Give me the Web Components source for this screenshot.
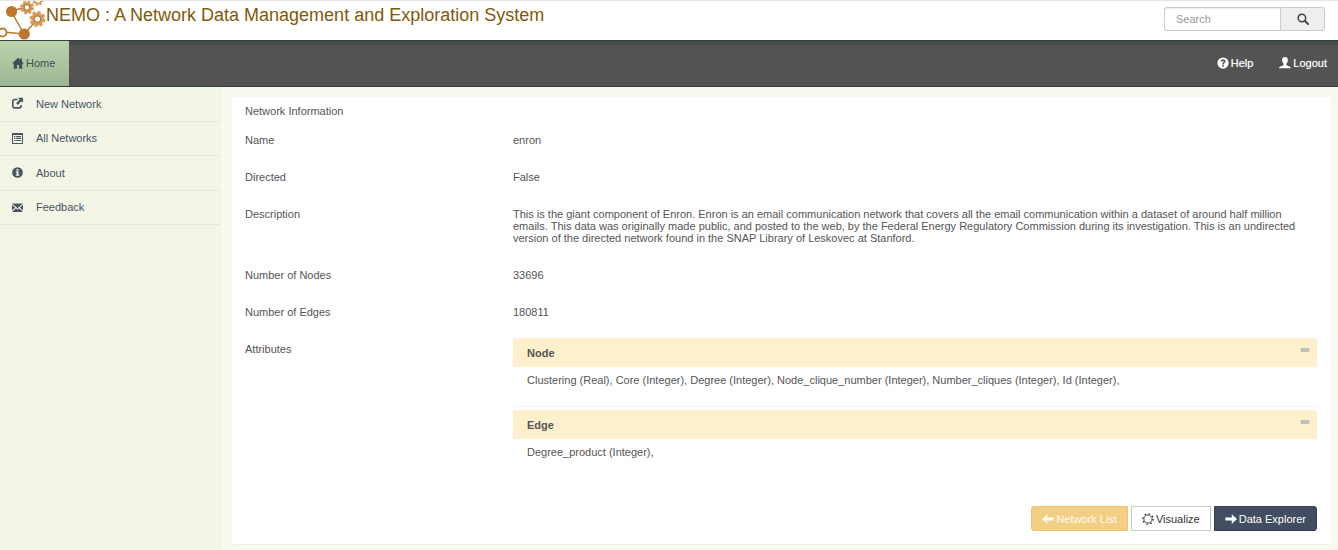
<!DOCTYPE html>
<html lang="en">
<head>
<meta charset="utf-8">
<title>NEMO</title>
<style>
html,body{margin:0;min-height:100%}
body{font:11px/12px "Liberation Sans",Arial,sans-serif;color:#555;background:#f9f9f0}
</style>
</head>
<body>
<nemo-app></nemo-app>
<script>
const ICONS={
home:'<path d="M8 1 0 8.800h2.400V15.500h4.300v-5h2.600v5h4.300V8.800H16L13.200 6V2h-2.400v1.800z"/>',
help:'<path fill-rule="evenodd" d="M8 .5a7.500 7.500 0 1 0 0 15 7.500 7.500 0 0 0 0-15zM6.900 11h2.200v2H6.900zM4.900 6.200C5 4.200 6.200 3 8.200 3c1.900 0 3.200 1.100 3.200 2.800 0 2.300-2.300 2.300-2.300 4.200H6.900c0-2.600 2.100-2.900 2.100-4 0-.6-.3-1-.9-1-.7 0-1 .5-1.100 1.400z"/>',
user:'<path d="M8 0C5.500 0 4.200 1.600 4.200 4c0 2.200.8 4 2 5v1.500C5.800 11.500 0 12 0 15h16c0-3-5.800-3.500-6.200-4.500V9c1.200-1 2-2.800 2-5C11.800 1.600 10.500 0 8 0z"/>',
search:'<path fill="none" stroke="currentColor" stroke-width="2" d="M11.500 6.700a5 5 0 1 1-10 0 5 5 0 0 1 10 0z"/><path fill="none" stroke="currentColor" stroke-width="2.600" stroke-linecap="round" d="m10.700 10.700 4 4"/>',
share:'<path fill="none" stroke="currentColor" stroke-width="2.400" d="M8 2.200H4A2.700 2.700 0 0 0 1.200 5v6.700a2.700 2.700 0 0 0 2.800 2.700h6.500a2.700 2.700 0 0 0 2.700-2.700V10"/><path d="M8.500-.5H16V7l-2.300-2.300L8.500 10 6 7.500l5.200-5.200z"/>',
list:'<path fill-rule="evenodd" d="M0 0h16v16H0zM1.500 3v11.500h13V3z"/><path d="M3 4.500h2V6H3zm3 0h7V6H6zM3 7.300h2v1.500H3zm3 0h7v1.500H6zM3 10.200h2v1.500H3zm3 0h7v1.500H6z"/>',
info:'<path fill-rule="evenodd" d="M8 .2a7.800 7.800 0 1 0 0 15.600A7.800 7.800 0 0 0 8 .2zM6.500 2.800h3v2.300h-3zM5.500 6.300h4v5h1.200v1.600H5.500v-1.600h1.200V8H5.500z"/>',
mail:'<path d="M0 2h16L8 9zM0 4l4.600 4L0 12.500zM16 4l-4.600 4 4.600 4.500zM0 14.500 5.700 9 8 11l2.300-2 5.700 5.500z"/>',
left:'<path d="M0 8l7-6.500V6h8.500v4H7v4.500z"/>',
right:'<path d="M16 8 9 1.500V6H.500v4H9v4.500z"/>',
cog:'<g fill="none" stroke="currentColor"><circle cx="8" cy="8" r="5.500" stroke-width="1.200"/><circle cx="8" cy="8" r="6.900" stroke-width="1.800" stroke-dasharray="2 3.419"/></g>',
minus:'<path fill="#bcbcbc" d="M1 5h14v6H1z"/>'
};
function define(name,html,setup){
  customElements.define(name,class extends HTMLElement{
    constructor(){super();this.attachShadow({mode:'open'}).innerHTML=html}
    connectedCallback(){if(setup)setup(this,this.shadowRoot)}
  });
}
define('nemo-icon','<style>:host{display:inline-block;flex:none;width:12px;height:12px}svg{display:block;width:100%;height:100%;overflow:visible}</style><svg viewBox="0 0 16 16" fill="currentColor" aria-hidden="true"></svg>',
 (e,r)=>{r.querySelector('svg').innerHTML=ICONS[e.getAttribute('name')]||''});

define('nemo-logo',`<style>:host{display:block;width:46px;height:39px}svg{display:block}</style>
<svg width="46" height="39" viewBox="0 1 46 39" aria-hidden="true">
<g stroke="#bf7730" stroke-width="1.500" fill="none"><path d="M11 11 24 34 37 20M11 11 27 7M3 32l21 2"/></g>
<g stroke="#d59b60" fill="#fff">
<circle cx="27" cy="7.500" r="4" stroke-width="3"/><circle cx="27" cy="7.500" r="5.800" fill="none" stroke-width="2.400" stroke-dasharray="2.500 2.055"/>
<circle cx="37.500" cy="19" r="4.800" stroke-width="3.200"/><circle cx="37.500" cy="19" r="6.800" fill="none" stroke-width="2.600" stroke-dasharray="3 2.341"/>
<circle cx="38" cy="0" r="3.500" stroke-width="2"/><circle cx="38" cy="0" r="4.800" fill="none" stroke-width="2" stroke-dasharray="2 1.770"/></g>
<g stroke="#bf7730" stroke-width="1.200" fill="#fff"><circle cx="27" cy="7.500" r="2.800"/><circle cx="37.500" cy="19" r="3.200"/><circle cx="2.500" cy="32.500" r="4" stroke-width="1.800"/></g>
<g fill="#bf7730"><circle cx="11.500" cy="11.500" r="5.600"/><circle cx="24.300" cy="34" r="5.600"/></g></svg>`);

define('nemo-header',`<style>
:host{display:flex;height:39px;border-top:1px solid #e7e7e7;background:#fff;justify-content:space-between}
.brand{display:flex}
h1{margin:4px 0 0;font-size:18px;line-height:20px;font-weight:400;color:#7f5a0a}
form{display:flex;margin:6px 13px 0 0;width:161px;height:24px}
input{box-sizing:border-box;flex:1;min-width:0;border:1px solid #ccc;border-right:0;border-radius:3px 0 0 3px;padding:0 11px;font:inherit;color:#555;box-shadow:inset 0 1px 1px #00000013}
input::placeholder{color:#999;opacity:1}
button{box-sizing:border-box;width:45px;padding:0;border:1px solid #ccc;border-radius:0 3px 3px 0;background:#eee;color:#444;display:grid;place-items:center}
</style>
<div class="brand"><nemo-logo></nemo-logo><h1>NEMO : A Network Data Management and Exploration System</h1></div>
<form role="search"><input type="text" placeholder="Search" aria-label="Search"><button type="button" aria-label="Submit search"><nemo-icon name="search"></nemo-icon></button></form>`);

define('nemo-nav',`<style>
:host{display:flex;height:45px;border:solid #2f4040;border-width:1px 0;background:linear-gradient(#484848,#535353 6px);justify-content:space-between}
a{display:flex;align-items:center;gap:2px;padding-bottom:2px;color:#fff;text-decoration:none}
.home{padding:0 14px 2px 12px;background:linear-gradient(#bbd4ae,#9db592);color:#3e4f55}
.right{display:flex;gap:26px;margin-right:11px}
.right a{text-shadow:0 0 1px #fff8}
</style>
<a class="home" href="#home"><nemo-icon name="home"></nemo-icon>Home</a>
<div class="right"><a href="#help"><nemo-icon name="help"></nemo-icon>Help</a><a href="#logout"><nemo-icon name="user"></nemo-icon>Logout</a></div>`);

define('nemo-sidebar',`<style>
:host{display:block;background:#f3f5e7}
nav{display:grid;grid-auto-rows:1fr;height:138px}
a{box-sizing:border-box;display:flex;align-items:center;gap:13px;padding-left:12px;color:#49555f;text-decoration:none;border-bottom:1px solid #e5e8da}
nemo-icon{width:11px;height:11px}
</style>
<nav><a href="#new"><nemo-icon name="share"></nemo-icon>New Network</a><a href="#all"><nemo-icon name="list"></nemo-icon>All Networks</a><a href="#about"><nemo-icon name="info"></nemo-icon>About</a><a href="#feedback"><nemo-icon name="mail"></nemo-icon>Feedback</a></nav>`);

define('attribute-panel',`<style>
:host{display:block;border-radius:2px;box-shadow:0 1px 1px #0000000d}
:host([flat]){box-shadow:none}
header{display:flex;align-items:center;justify-content:space-between;height:29px;padding:0 7px 0 14px;background:#fff0cd;border-radius:2px 2px 0 0}
h3{margin:0;font-size:11px;line-height:12px}
button{border:0;padding:0 0 5px;background:none;display:block}
nemo-icon{display:block;width:10px;height:10px}
.body{padding:7px 14px 20px}
</style>
<header><h3><slot name="title"></slot></h3><button type="button" aria-label="Collapse"><nemo-icon name="minus"></nemo-icon></button></header>
<div class="body"><slot></slot></div>`);

define('nemo-button',`<style>
:host{display:block}
button{box-sizing:border-box;height:25px;display:flex;align-items:center;gap:2px;padding:0 10px;border:1px solid #c8c8c8;background:#fff;color:#333;font:inherit;white-space:nowrap}
:host([kind=back]) button{background:#f3ce85;border-color:#f0c36c;color:#fffaf0;border-radius:3px 0 0 3px}
:host([kind=next]) button{background:#424d62;border-color:#364156;color:#fff;border-radius:0 3px 3px 0}
</style><button type="button"><nemo-icon></nemo-icon><slot></slot></button>`,(e,r)=>{
 const i=document.createElement('nemo-icon');i.setAttribute('name',e.getAttribute('icon'));r.querySelector('nemo-icon').replaceWith(i)});

define('network-card',`<style>
:host{display:block;background:#fff;border-radius:2px;box-shadow:0 1px 1px #0000000d;padding:8px 14px 13px 13px}
h2{margin:0 0 12px;font-size:11px;line-height:12px;font-weight:400}
dl{display:grid;grid-template-columns:1fr 3fr;row-gap:13px;margin:0}
dt,dd{margin:0;padding:5px 0 7px}
.panels{display:grid;gap:4px;padding:0}
footer{display:flex;justify-content:flex-end;gap:3px;margin-top:28px}
</style>
<h2>Network Information</h2>
<dl>
<dt>Name</dt><dd>enron</dd>
<dt>Directed</dt><dd>False</dd>
<dt>Description</dt><dd>This is the giant component of Enron. Enron is an email communication network that covers all the email communication within a dataset of around half million emails. This data was originally made public, and posted to the web, by the Federal Energy Regulatory Commission during its investigation. This is an undirected version of the directed network found in the SNAP Library of Leskovec at Stanford.</dd>
<dt>Number of Nodes</dt><dd>33696</dd>
<dt>Number of Edges</dt><dd>180811</dd>
<dt>Attributes</dt><dd class="panels">
<attribute-panel><span slot="title">Node</span>Clustering (Real), Core (Integer), Degree (Integer), Node_clique_number (Integer), Number_cliques (Integer), Id (Integer),</attribute-panel>
<attribute-panel flat><span slot="title">Edge</span>Degree_product (Integer),</attribute-panel></dd>
</dl>
<footer><nemo-button kind="back" icon="left">Network List</nemo-button><nemo-button icon="cog">Visualize</nemo-button><nemo-button kind="next" icon="right">Data Explorer</nemo-button></footer>`);

define('nemo-app',`<style>
:host{display:flex;flex-direction:column;min-height:100vh}
.page{flex:1;display:grid;grid-template-columns:221px minmax(0,1fr)}
main{padding:10px 7px 6px 11px}
</style><nemo-header></nemo-header><nemo-nav></nemo-nav><div class="page"><nemo-sidebar></nemo-sidebar><main><network-card></network-card></main></div>`);
</script>
</body>
</html>
